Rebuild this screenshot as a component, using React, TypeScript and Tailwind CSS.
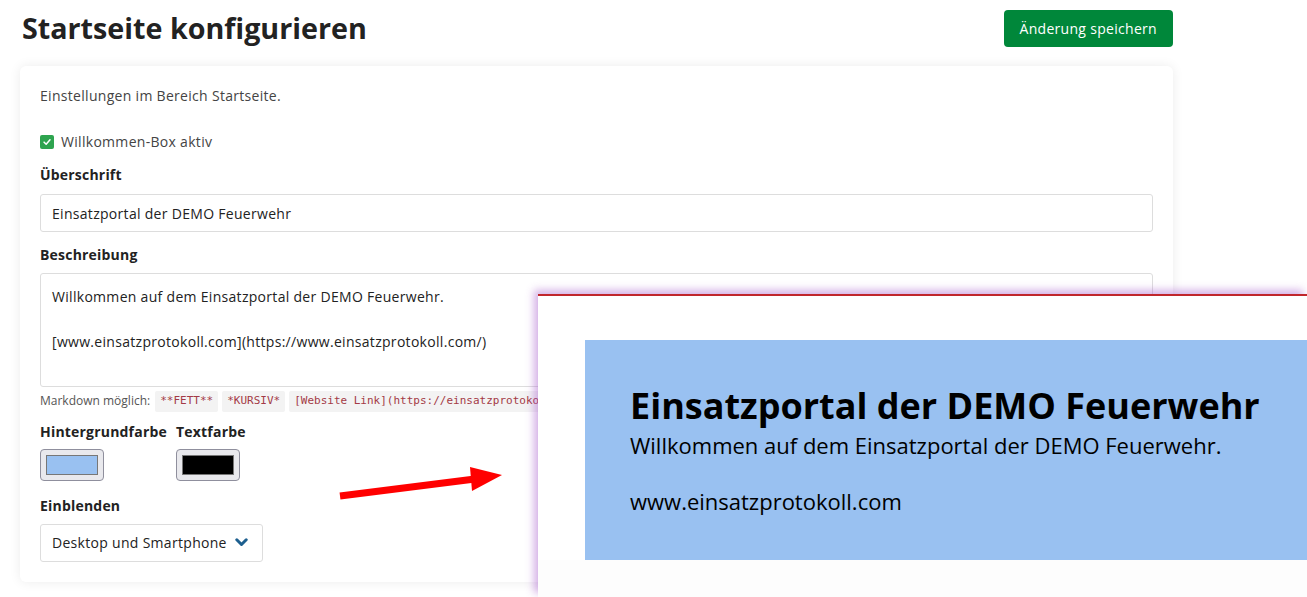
import React from 'react';

function Label({ children }: { children: React.ReactNode }) {
  return <div className="text-[14px] font-bold text-[#222] leading-5 tracking-[0.2px]">{children}</div>;
}

function Code({ children }: { children: React.ReactNode }) {
  return (
    <code className="bg-[#f3f3f3] px-[5px] py-[2px] rounded-[2px] text-[11px] text-[#a33a46] font-['DejaVu_Sans_Mono',monospace] tracking-normal">
      {children}
    </code>
  );
}

function Swatch({ color }: { color: string }) {
  return (
    <div className="w-[64px] h-[32px] rounded-[4px] border border-[#8f8f9d] bg-[#e9e9ed] p-[5px]">
      <div className="w-full h-full border border-[#777]" style={{ background: color }} />
    </div>
  );
}

function Preview() {
  return (
    <div className="absolute left-[538px] top-[294px] right-0 bottom-0 bg-[#fdfdfd] border-t-2 border-[#c0262c] shadow-[-4px_-4px_8px_rgba(160,80,200,0.45)] tracking-normal">
      <div className="bg-white pt-[44px] pl-[47px]">
        <div className="bg-[#99c1f1] h-[220px] pl-[45px] pt-[46px] text-black whitespace-nowrap">
          <div className="text-[36px] font-bold leading-[40px]">Einsatzportal der DEMO Feuerwehr</div>
          <div className="text-[22px] leading-[28px] mt-[5px]">Willkommen auf dem Einsatzportal der DEMO Feuerwehr.</div>
          <div className="text-[22px] leading-[28px] mt-[28px]">www.einsatzprotokoll.com</div>
        </div>
      </div>
    </div>
  );
}

export default function App() {
  return (
    <div className="relative w-[1307px] h-[597px] overflow-hidden bg-white font-['Open_Sans',sans-serif] text-[#333] tracking-[0.3px]">
      <div className="w-[1153px] ml-[20px]">
        <div className="flex items-center justify-between h-[58px] pb-[2px]">
          <h1 className="text-[28.7px] font-bold text-[#222] ml-[2px] tracking-[0px]">Startseite konfigurieren</h1>
          <button className="bg-[#00873a] text-white text-[14px] px-[16px] h-[37px] rounded-[4px]">
            Änderung speichern
          </button>
        </div>

        <div className="mt-[8px] rounded-[6px] bg-white shadow-[0_0_12px_rgba(0,0,0,0.08)] px-[20px] pt-[20px] pb-[20px]">
          <p className="text-[14px] text-[#444] leading-5">Einstellungen im Bereich Startseite.</p>

          <label className="mt-[26px] flex items-center gap-[7px] text-[14px] text-[#444] leading-5">
            <span className="w-[14px] h-[14px] rounded-[2px] bg-[#2ea44f] flex items-center justify-center">
              <svg viewBox="0 0 12 12" className="w-[10px] h-[10px]">
                <path d="M2.5 6.2 L5 8.6 L9.6 3.4" fill="none" stroke="white" strokeWidth="1.8" strokeLinecap="round" strokeLinejoin="round" />
              </svg>
            </span>
            Willkommen-Box aktiv
          </label>

          <div className="mt-[13px]">
            <Label>Überschrift</Label>
          </div>
          <div className="mt-[9px] h-[38px] border border-[#ddd] rounded-[3px] flex items-center px-[11px] text-[14px] text-[#222]">
            Einsatzportal der DEMO Feuerwehr
          </div>

          <div className="mt-[13px]">
            <Label>Beschreibung</Label>
          </div>
          <div className="mt-[8px] h-[114px] border border-[#ddd] rounded-[3px] px-[11px] pt-[12px] text-[14px] text-[#222] leading-[22.5px]">
            <div>Willkommen auf dem Einsatzportal der DEMO Feuerwehr.</div>
            <div className="mt-[22.5px]">[www.einsatzprotokoll.com](https://www.einsatzprotokoll.com/)</div>
          </div>
          <div className="mt-[4px] flex items-center gap-[4px] text-[12px] text-[#555] whitespace-nowrap tracking-normal">
            <span className="mr-[1px]">Markdown möglich:</span>
            <Code>**FETT**</Code>
            <Code>*KURSIV*</Code>
            <Code>[Website Link](https://einsatzprotokoll.com/)</Code>
          </div>

          <div className="mt-[10px] flex gap-[9px]">
            <div>
              <Label>Hintergrundfarbe</Label>
              <div className="mt-[7px]">
                <Swatch color="#99c1f1" />
              </div>
            </div>
            <div>
              <Label>Textfarbe</Label>
              <div className="mt-[7px]">
                <Swatch color="#000000" />
              </div>
            </div>
          </div>

          <div className="mt-[15px]">
            <Label>Einblenden</Label>
          </div>
          <div className="mt-[8px] w-[223px] h-[38px] border border-[#ddd] rounded-[3px] flex items-center justify-between pl-[11px] pr-[14px] text-[14px] text-[#222]">
            <span>Desktop und Smartphone</span>
            <svg width="13" height="9" viewBox="0 0 13 9">
              <polyline points="1.8,1.8 6.5,6.5 11.2,1.8" fill="none" stroke="#1d5f8f" strokeWidth="3" strokeLinecap="round" strokeLinejoin="round" />
            </svg>
          </div>
        </div>
      </div>

      <svg className="absolute left-[335px] top-[460px]" width="175" height="45" viewBox="0 0 175 45">
        <line x1="5" y1="36" x2="140" y2="19" stroke="#ff0000" strokeWidth="7" />
        <polygon points="135,7 167,15 137,31" fill="#ff0000" />
      </svg>

      <Preview />
    </div>
  );
}
